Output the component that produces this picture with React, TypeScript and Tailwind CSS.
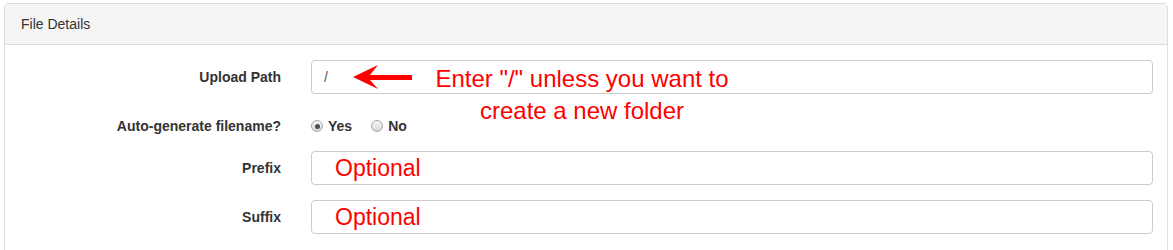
import React from "react";

const Radio = ({ checked }: { checked?: boolean }) => (
  <span className="flex h-[12px] w-[12px] items-center justify-center rounded-full border border-[#a6a6a6] bg-gradient-to-b from-[#f6f6f6] to-[#d9d9d9]">
    {checked && <span className="h-[5px] w-[5px] rounded-full bg-[#4d4d4d]" />}
  </span>
);

const FieldBox = ({ children, pad }: { children?: React.ReactNode; pad: string }) => (
  <div className={`flex h-[34px] w-[842px] items-center rounded-[4px] border border-[#cccccc] bg-white ${pad}`}>
    {children}
  </div>
);

const Label = ({ children }: { children: React.ReactNode }) => (
  <div className="w-[276px] text-right text-[14px] font-bold text-[#333333]">{children}</div>
);

export default function App() {
  return (
    <div className="h-[250px] w-[1173px] overflow-hidden bg-white pl-[4px] pt-[3px] font-['Liberation_Sans',Arial,sans-serif]">
      <div className="relative w-[1164px] rounded-t-[4px] border border-[#dddddd] pb-[40px]">
        <div className="flex h-[41px] items-center border-b border-[#dddddd] bg-[#f5f5f5] px-[16px] text-[14px] text-[#333333]">
          File Details
        </div>

        <div className="pr-[14px] pt-[15px]">
          <div className="flex items-center gap-[30px]">
            <Label>Upload Path</Label>
            <FieldBox pad="pl-[12px]">
              <span className="text-[14px] text-[#555555]">/</span>
            </FieldBox>
          </div>

          <div className="mt-[22px] flex h-[20px] items-center gap-[30px]">
            <Label>Auto-generate filename?</Label>
            <div className="flex items-center text-[14px] font-bold text-[#333333]">
              <Radio checked />
              <span className="ml-[5px]">Yes</span>
              <span className="ml-[19px]">
                <Radio />
              </span>
              <span className="ml-[5px]">No</span>
            </div>
          </div>

          <div className="mt-[15px] flex items-center gap-[30px]">
            <Label>Prefix</Label>
            <FieldBox pad="pl-[23px]">
              <span className="text-[23px] leading-none text-[#ff0000]">Optional</span>
            </FieldBox>
          </div>

          <div className="mt-[15px] flex items-center gap-[30px]">
            <Label>Suffix</Label>
            <FieldBox pad="pl-[23px]">
              <span className="text-[23px] leading-none text-[#ff0000]">Optional</span>
            </FieldBox>
          </div>
        </div>

        {/* annotation arrow */}
        <svg
          className="absolute left-[346px] top-[59px]"
          width="62"
          height="28"
          viewBox="0 0 62 28"
        >
          <path d="M2 14 L27 2 L19 12 L61 12 L61 17 L19 17 L27 26 Z" fill="#ff0000" />
        </svg>

        {/* annotation text */}
        <div className="absolute left-[427px] top-[59px] w-[300px] text-center text-[24px] leading-[32px] text-[#ff0000]">
          Enter "/" unless you want to
          <br />
          create a new folder
        </div>
      </div>
    </div>
  );
}
